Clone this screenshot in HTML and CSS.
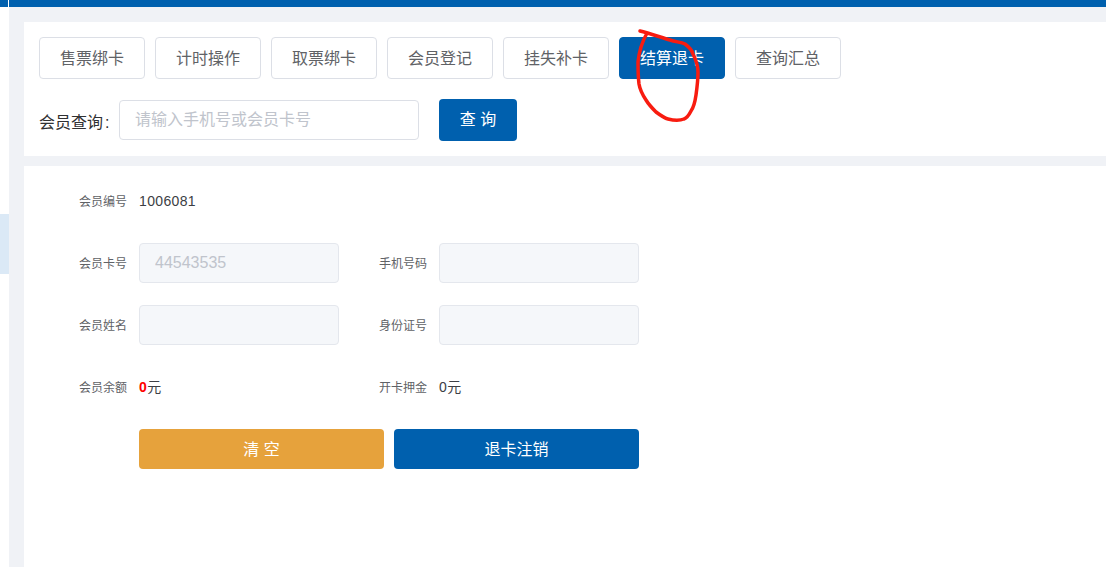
FILE: index.html
```html
<!DOCTYPE html>
<html lang="zh-CN">
<head>
<meta charset="utf-8">
<title>结算退卡</title>
<link rel="stylesheet" href="styles.css">
</head>
<body>
<div class="app">
  <aside class="sidebar">
    <div class="side-top"></div>
    <div class="side-active"></div>
  </aside>
  <div class="main">
    <div class="topbar"></div>
    <div class="content">
      <section class="card search-card">
        <nav class="tabs">
          <button class="tab">售票绑卡</button>
          <button class="tab">计时操作</button>
          <button class="tab">取票绑卡</button>
          <button class="tab">会员登记</button>
          <button class="tab">挂失补卡</button>
          <button class="tab tab-active">结算退卡</button>
          <button class="tab">查询汇总</button>
        </nav>
        <div class="search-row">
          <label class="search-label">会员查询<span class="colon">:</span></label>
          <input class="search-input" type="text" placeholder="请输入手机号或会员卡号">
          <button class="search-btn">查 询</button>
        </div>
      </section>
      <section class="card form-card">
        <div class="form-grid">
          <span class="label label-first">会员编号</span>
          <span class="value value-first">1006081</span>
          <span></span><span></span><span></span>

          <span class="label">会员卡号</span>
          <input class="field" type="text" disabled value="44543535">
          <span></span>
          <span class="label">手机号码</span>
          <input class="field" type="text" disabled>

          <span class="label">会员姓名</span>
          <input class="field" type="text" disabled>
          <span></span>
          <span class="label">身份证号</span>
          <input class="field" type="text" disabled>

          <span class="label">会员余额</span>
          <span class="value"><b class="money">0</b>元</span>
          <span></span>
          <span class="label">开卡押金</span>
          <span class="value">0元</span>

          <span></span>
          <div class="actions">
            <button class="action action-clear">清 空</button>
            <button class="action action-refund">退卡注销</button>
          </div>
        </div>
      </section>
    </div>
  </div>
</div>
<svg class="annotation" viewBox="0 0 1106 567" width="1106" height="567" aria-hidden="true">
  <path d="M640 31 C648 33 660 37 670 40 C676 42 681 42 685 44 C689 47 692 50 693 54 C696 60 698 65 698 72 C698 80 697 88 696 95 C695 102 694 107 691 111 C689 115 687 118 684 119 C679 121 672 120 668 119 C664 118 660 115 656 112 C652 108 649 105 646 100 C642 94 640 90 639 84 C638 76 638 68 638 62 C639 52 642 42 647 33" />
</svg>
</body>
</html>
```
FILE: styles.css
```css
* { box-sizing: border-box; }
html, body { margin: 0; height: 100%; overflow: hidden; background: #fff; }
body { font-family: "Liberation Sans", "Noto Sans CJK SC", sans-serif; color: #303133; }
button, input { font-family: inherit; }

.app { display: flex; height: 567px; width: 1106px; }

.sidebar { width: 9px; flex: none; display: flex; flex-direction: column; background: #fff; }
.side-top { height: 7px; width: 8px; background: #0060ae; }
.side-active { height: 60px; margin-top: 207px; background: #dbe9f6; }

.main { flex: 1; min-width: 0; display: flex; flex-direction: column; }
.topbar { height: 7px; background: #0060ae; flex: none; }
.content { flex: 1; display: flex; flex-direction: column; gap: 10px; padding: 15px 0 0 15px; background: #f0f2f6; }

.card { background: #fff; }
.search-card { height: 134px; padding: 15px; }
.form-card { flex: 1; padding: 13px 0 0 55px; }

.tabs { display: flex; gap: 10px; }
.tab {
  width: 106px; height: 42px; padding: 0 0 2px;
  font-size: 16px; color: #606266;
  background: #fff; border: 1px solid #dcdfe6; border-radius: 4px;
}
.tab-active { background: #0060ae; border-color: #0060ae; color: #fff; }

.search-row { display: flex; align-items: center; margin-top: 20px; }
.search-label { width: 80px; padding-top: 2px; font-size: 16px; color: #303133; white-space: nowrap; }
.colon { margin-left: 2px; }
.search-input {
  width: 300px; height: 40px; padding: 0 15px;
  font-size: 16px; color: #606266;
  background: #fff; border: 1px solid #dcdfe6; border-radius: 4px; outline: none;
}
.search-input::placeholder { color: #c0c4cc; opacity: 1; }
.search-btn {
  width: 78px; height: 42px; margin-left: 20px; padding: 0 0 4px;
  font-size: 16px; color: #fff;
  background: #0060ae; border: 0; border-radius: 4px;
}

.form-grid {
  display: grid;
  grid-template-columns: 60px 200px 40px 60px 200px;
  grid-template-rows: 42px 40px 40px 40px 40px;
  row-gap: 22px;
  align-items: center;
}
.label { padding-bottom: 2px; font-size: 12px; color: #606266; white-space: nowrap; }
.value { padding-bottom: 2px; font-size: 14px; letter-spacing: .35px; color: #3c3e44; }
.label-first { padding-bottom: 0; padding-top: 1px; }
.value-first { padding-bottom: 0; padding-top: 1px; }
.money { color: #f00; }
.field {
  width: 200px; height: 40px; padding: 0 15px;
  font-size: 16px;
  background: #f5f7fa; border: 1px solid #e4e7ed; border-radius: 4px; color: #c0c4cc;
}

.actions { grid-column: 2 / 6; display: flex; gap: 10px; }
.action {
  flex: 1; height: 40px; padding: 0 0 2px;
  font-size: 16px; color: #fff; border: 0; border-radius: 4px;
}
.action-clear { background: #e6a23c; }
.action-refund { background: #0060ae; }

.annotation { position: absolute; left: 0; top: 0; pointer-events: none; }
.annotation path { fill: none; stroke: #f81c10; stroke-width: 3.5; stroke-linecap: round; stroke-linejoin: round; }
```
